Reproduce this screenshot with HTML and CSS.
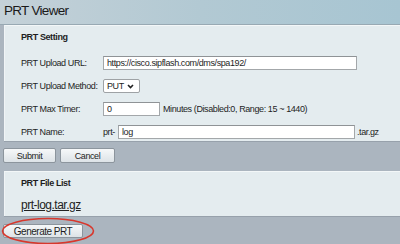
FILE: index.html
```html
<!DOCTYPE html>
<html lang="en">
<head>
    <meta charset="UTF-8">
    <title>PRT Viewer</title>
    <link rel="stylesheet" href="styles.css">
</head>
<body>
    <div class="header">PRT Viewer</div>

    <div class="panel setting">
        <div class="panel-title">PRT Setting</div>
        <div class="form">
            <div class="label">PRT Upload URL:</div>
            <div class="field"><input type="text" class="url" value="https://cisco.sipflash.com/dms/spa192/"></div>

            <div class="label">PRT Upload Method:</div>
            <div class="field">
                <div class="select">PUT
                    <svg width="7" height="5" viewBox="0 0 7 5"><path d="M1 1 L3.5 3.5 L6 1" fill="none" stroke="#222" stroke-width="1.6"/></svg>
                </div>
            </div>

            <div class="label">PRT Max Timer:</div>
            <div class="field"><input type="text" class="timer" value="0"><span class="hint">Minutes (Disabled:0, Range: 15 ~ 1440)</span></div>

            <div class="label">PRT Name:</div>
            <div class="field"><span class="prefix">prt-</span><input type="text" class="name" value="log"><span class="suffix">.tar.gz</span></div>
        </div>
    </div>

    <div class="actions">
        <button>Submit</button>
        <button class="cancel">Cancel</button>
    </div>

    <div class="panel files">
        <div class="panel-title">PRT File List</div>
        <a href="#" class="file-link">prt-log.tar.gz</a>
    </div>

    <div class="generate">
        <button class="gen-btn">Generate PRT</button>
        <svg class="circle" width="94" height="28" viewBox="0 0 94 28"><ellipse cx="47" cy="14" rx="45.5" ry="12.5" fill="none" stroke="#d8372c" stroke-width="1.6"/></svg>
    </div>
</body>
</html>
```

FILE: styles.css
```css
body {
    margin: 0;
    background-color: #abb5bf;
    font-family: "Liberation Sans", Arial, sans-serif;
    color: #1e1e1e;
    font-size: 9px;
    letter-spacing: -0.4px;
    height: 244px;
    overflow: hidden;
}

.header {
    height: 24px;
    line-height: 21px;
    padding-left: 4px;
    font-size: 13.5px;
    letter-spacing: -0.7px;
    color: #1a1a1a;
    background: linear-gradient(to right, #c4d1d8, #b2c9d3 50%, #a7c5d2);
    border-bottom: 1px solid #98a9b3;
}

.panel {
    margin-left: 4px;
    background-color: #e4ecef;
    border-top: 1px solid #f3f7f8;
    border-left: 1px solid #f0f4f6;
    box-shadow: 0 1px 0 #97a1ab;
    padding-left: 16px;
}

.setting {
    height: 110px;
    padding-top: 5px;
}

.panel-title {
    font-weight: bold;
    line-height: 12px;
}

.form {
    display: grid;
    grid-template-columns: 82px auto;
    grid-auto-rows: 14px;
    row-gap: 9px;
    margin-top: 13px;
    align-items: center;
}

.field {
    display: flex;
    align-items: center;
    height: 14px;
}

input[type="text"] {
    box-sizing: border-box;
    height: 14px;
    margin: 0;
    padding: 0 3px;
    border: 1px solid #a3a7aa;
    border-top-color: #8f9396;
    background-color: #fff;
    font-family: "Liberation Sans", Arial, sans-serif;
    font-size: 9px;
    letter-spacing: -0.4px;
    color: #1e1e1e;
}

.url {
    width: 254px;
}

.timer {
    width: 57px;
}

.name {
    width: 237px;
}

.hint {
    margin-left: 3px;
}

.prefix {
    width: 15px;
}

.suffix {
    margin-left: 2px;
}

.select {
    box-sizing: border-box;
    width: 37px;
    height: 14px;
    padding-left: 3px;
    display: flex;
    align-items: center;
    justify-content: space-between;
    padding-right: 5px;
    background-color: #fff;
    border: 1px solid #9ea2a5;
    border-radius: 2px;
}

.actions {
    display: flex;
    gap: 4px;
    margin: 7px 0 0 3px;
}

button {
    box-sizing: border-box;
    height: 15px;
    padding: 0;
    border: 1px solid #8c959d;
    border-radius: 2px;
    background: linear-gradient(#f6f8f9, #dde3e7);
    font-family: "Liberation Sans", Arial, sans-serif;
    font-size: 9px;
    letter-spacing: -0.4px;
    color: #1e1e1e;
    width: 53px;
}

.cancel {
    width: 55px;
}

.files {
    margin-top: 8px;
    height: 39px;
    padding-top: 5px;
}

.file-link {
    display: inline-block;
    margin-top: 10px;
    font-size: 12px;
    letter-spacing: -0.5px;
    color: #222;
    text-decoration: underline;
    line-height: 12px;
}

.generate {
    position: relative;
    margin: 8px 0 0 3px;
}

.gen-btn {
    width: 80px;
    height: 14px;
    font-size: 10px;
    letter-spacing: -0.5px;
}

.circle {
    position: absolute;
    left: -2px;
    top: -7px;
}
```
